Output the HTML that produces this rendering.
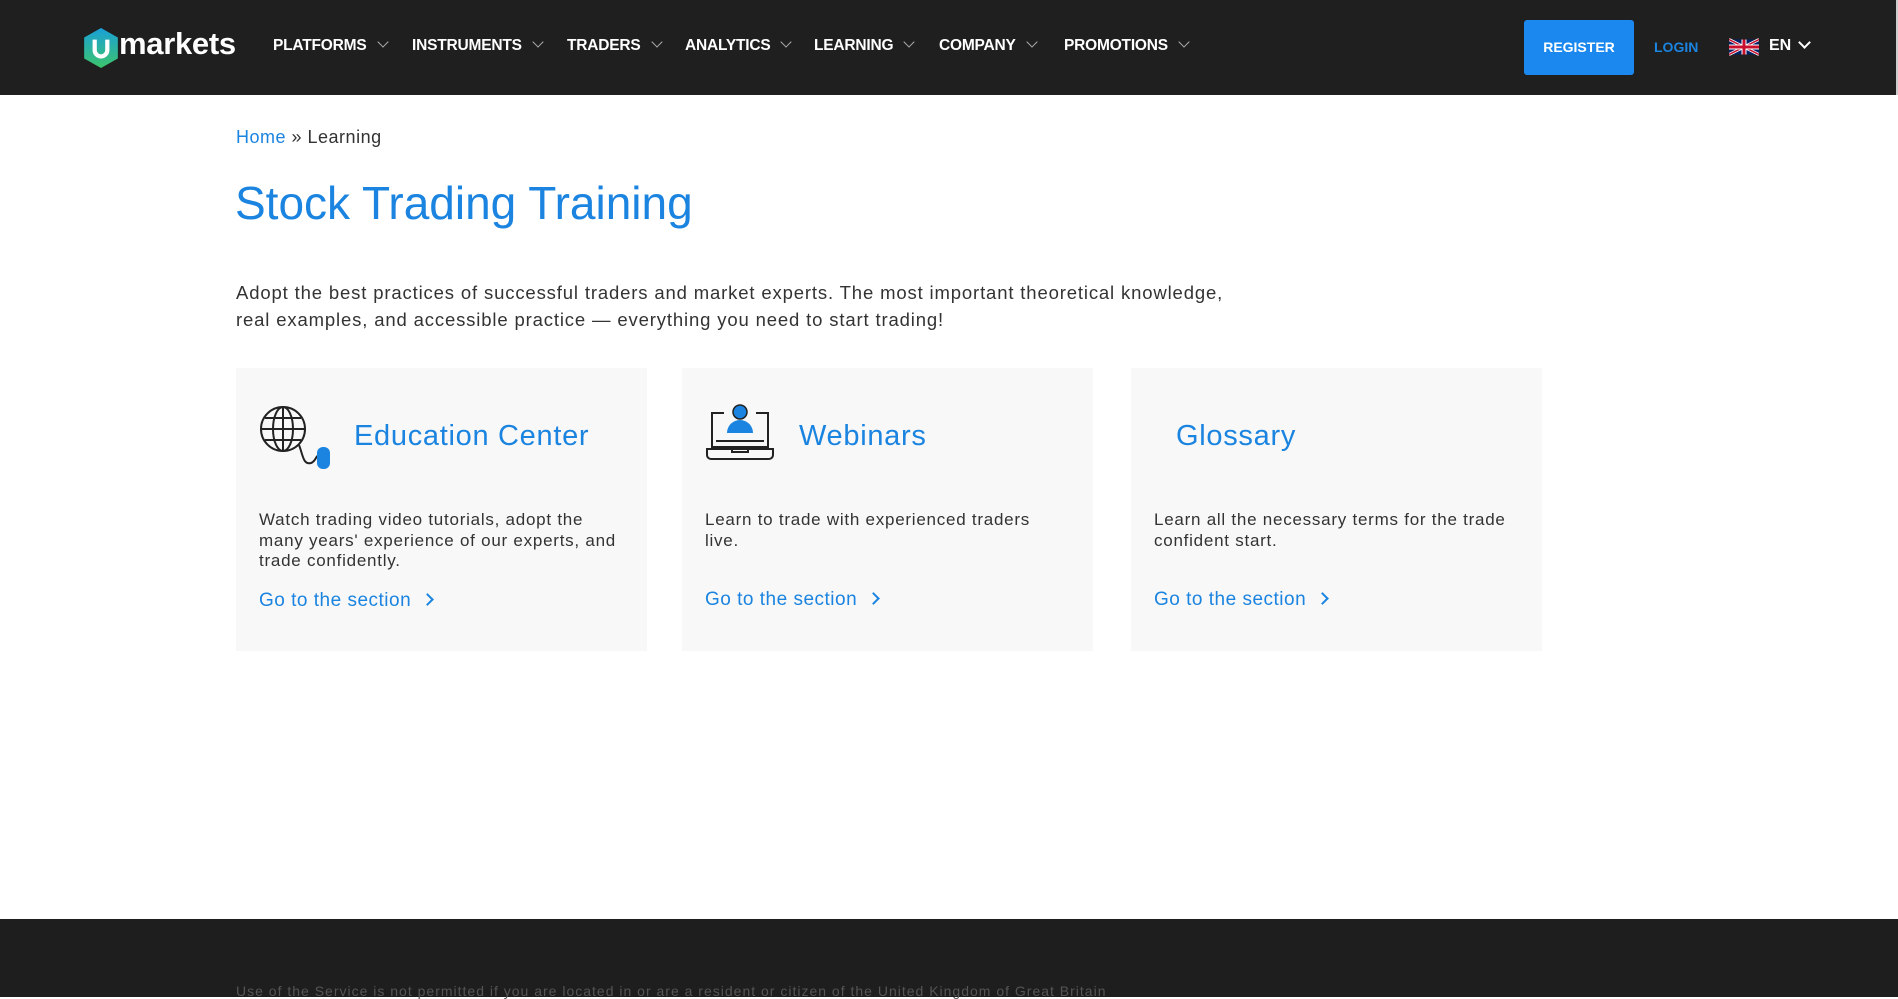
<!DOCTYPE html>
<html><head><meta charset="utf-8"><style>
*{margin:0;padding:0;box-sizing:border-box}
body{width:1898px;height:997px;overflow:hidden;background:#fff;font-family:"Liberation Sans",sans-serif;position:relative;color:#333}
.hdr{position:absolute;left:0;top:0;width:1898px;height:95px;background:#1f1f1f;border-right:2px solid #ccc}
.nav{position:absolute;top:37px;font-weight:bold;font-size:15.5px;color:#fff;letter-spacing:-0.2px}
.nav span.c{display:inline-block;width:8px;height:8px;border-right:1.5px solid #aaa;border-bottom:1.5px solid #aaa;transform:rotate(45deg);margin-left:12px;position:relative;top:-4px}
.abs{position:absolute}
.card{position:absolute;top:368px;width:411px;height:283px;background:#f8f8f8}
.card h3{position:absolute;top:52px;font-weight:normal;font-size:29px;color:#1a84e0;letter-spacing:0.7px}
.card p{position:absolute;left:23px;top:142px;width:375px;font-size:17px;line-height:20.5px;color:#333;letter-spacing:0.75px}
.card a{position:absolute;left:23px;top:222px;font-size:19px;color:#1a84e0;text-decoration:none;letter-spacing:0.5px}
.card a:after{content:"";display:inline-block;width:7px;height:7px;border-right:2px solid #1a84e0;border-top:2px solid #1a84e0;transform:rotate(45deg);margin-left:12px;position:relative;top:-2px}
</style></head><body>
<div class="hdr">
 <svg class="abs" style="left:84px;top:28px" width="34" height="40" viewBox="0 0 32 38"><defs><linearGradient id="g" x1="0" y1="0" x2="0" y2="1"><stop offset="0" stop-color="#1aa0d8"/><stop offset="1" stop-color="#3cc46c"/></linearGradient></defs><polygon points="16,0 32,9 32,29 16,38 0,29 0,9" fill="url(#g)"/><path d="M10 11v10a6 6 0 0 0 12 0V11" stroke="#fff" stroke-width="4" fill="none"/></svg>
 <div class="abs" style="left:119px;top:26px;font-size:31px;font-weight:bold;color:#fff;letter-spacing:-0.3px">markets</div>
 <div class="nav" style="left:273px">PLATFORMS<span class="c"></span></div>
 <div class="nav" style="left:412px">INSTRUMENTS<span class="c"></span></div>
 <div class="nav" style="left:567px">TRADERS<span class="c"></span></div>
 <div class="nav" style="left:685px">ANALYTICS<span class="c"></span></div>
 <div class="nav" style="left:814px">LEARNING<span class="c"></span></div>
 <div class="nav" style="left:939px">COMPANY<span class="c"></span></div>
 <div class="nav" style="left:1064px">PROMOTIONS<span class="c"></span></div>
 <div class="abs" style="left:1524px;top:20px;width:110px;height:55px;background:#1a88ee;border-radius:3px;color:#fff;font-weight:bold;font-size:14px;text-align:center;line-height:55px">REGISTER</div>
 <div class="abs" style="left:1654px;top:39px;color:#1a84e0;font-weight:bold;font-size:14px">LOGIN</div>
 <svg class="abs" style="left:1729px;top:36px" width="30" height="22" viewBox="0 0 60 30"><rect width="60" height="30" fill="#012169"/><path d="M0 0L60 30M60 0L0 30" stroke="#fff" stroke-width="6"/><path d="M0 0L60 30M60 0L0 30" stroke="#c8102e" stroke-width="3"/><path d="M30 0v30M0 15h60" stroke="#fff" stroke-width="10"/><path d="M30 0v30M0 15h60" stroke="#c8102e" stroke-width="6"/></svg>
 <div class="abs" style="left:1769px;top:37px;color:#fff;font-weight:bold;font-size:16px">EN</div>
 <div class="abs" style="left:1800px;top:38px;width:9px;height:9px;border-right:2.5px solid #fff;border-bottom:2.5px solid #fff;transform:rotate(45deg)"></div>
</div>
<div class="abs" style="left:236px;top:127px;font-size:18px;color:#333;letter-spacing:0.5px"><span style="color:#1a84e0">Home</span> » Learning</div>
<div class="abs" style="left:235px;top:176px;font-size:46px;color:#1a84e0">Stock Trading Training</div>
<div class="abs" style="left:236px;top:279px;font-size:18.5px;line-height:27px;color:#333;width:1300px;letter-spacing:0.85px">Adopt the best practices of successful traders and market experts. The most important theoretical knowledge,<br>real examples, and accessible practice — everything you need to start trading!</div>

<div class="card" style="left:236px">
 <svg class="abs" style="left:23px;top:37px" width="75" height="65" viewBox="0 0 75 65"><g stroke="#222" stroke-width="2" fill="none"><circle cx="24" cy="24" r="22"/><ellipse cx="24" cy="24" rx="10" ry="22"/><path d="M24 2v44M2 24h44M6 13h36M6 35h36"/><path d="M40 40c4 10 4 20 12 18c6-2 4-10 12-8"/></g><rect x="58" y="42" width="13" height="22" rx="6" fill="#1a84e0"/></svg>
 <h3 style="left:118px">Education Center</h3>
 <p style="width:364px">Watch trading video tutorials, adopt the many years' experience of our experts, and trade confidently.</p>
 <a>Go to the section</a>
</div>
<div class="card" style="left:682px">
 <svg class="abs" style="left:24px;top:35px" width="70" height="60" viewBox="0 0 70 60"><g stroke="#222" stroke-width="2" fill="none"><path d="M18 10H6v34h56V10H50"/><path d="M1 46h66v6a4 4 0 0 1-4 4H5a4 4 0 0 1-4-4z"/><path d="M26 46v3h16v-3"/><path d="M10 38h48"/></g><circle cx="34" cy="9" r="7" fill="#1a84e0" stroke="#222" stroke-width="1.5"/><path d="M21 30a13 13 0 0 1 26 0z" fill="#1a84e0"/></svg>
 <h3 style="left:117px">Webinars</h3>
 <p style="width:335px">Learn to trade with experienced traders live.</p>
 <a style="top:221px">Go to the section</a>
</div>
<div class="card" style="left:1131px">
 <h3 style="left:45px">Glossary</h3>
 <p style="width:370px">Learn all the necessary terms for the trade confident start.</p>
 <a style="top:221px">Go to the section</a>
</div>

<div class="abs" style="left:0;top:919px;width:1898px;height:78px;background:#1e1e1e"></div>
<div class="abs" style="left:236px;top:983px;font-size:14px;color:#555;white-space:nowrap;letter-spacing:1.0px">Use of the Service is not permitted if you are located in or are a resident or citizen of the United Kingdom of Great Britain</div>
</body></html>
